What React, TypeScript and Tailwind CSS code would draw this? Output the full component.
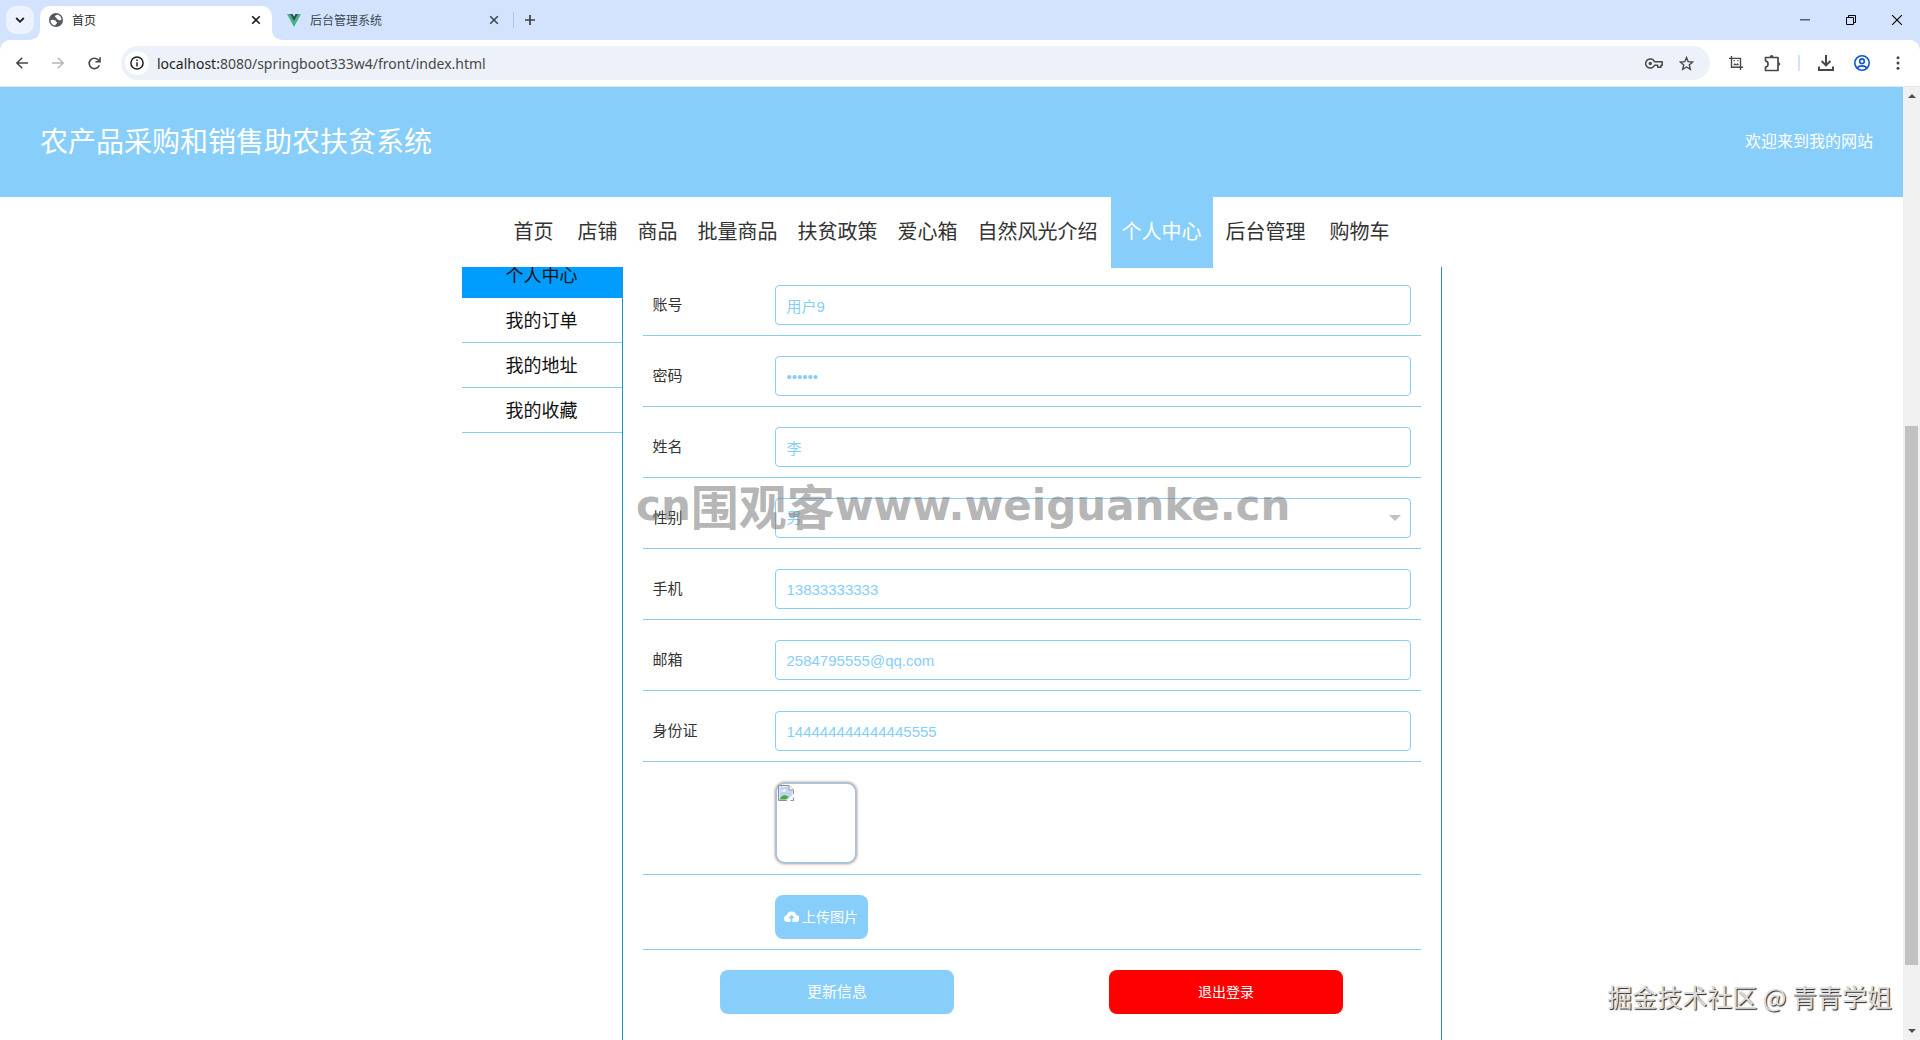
import type { ReactNode } from "react";

const CJK = "font-['Noto_Sans_CJK_SC',sans-serif]";
const FIELD =
  "block h-[40px] w-full appearance-none rounded border border-[#87cefa] bg-white px-[11px] font-['Liberation_Sans','Noto_Sans_CJK_SC',sans-serif] text-[15px] text-[#87cefa] outline-none";

function IconButton({ label, className, children }: { label: string; className: string; children: ReactNode }) {
  return (
    <button type="button" aria-label={label} className={`flex shrink-0 items-center justify-center ${className}`}>
      {children}
    </button>
  );
}

function CloseIcon() {
  return (
    <svg width="10" height="10" viewBox="0 0 10 10" fill="none" stroke="currentColor" strokeWidth="1.6">
      <path d="M1.2 1.2l7.6 7.6M8.8 1.2L1.2 8.8" />
    </svg>
  );
}

function TabStrip() {
  return (
    <header className="flex h-[40px] shrink-0 items-center pl-[6px] text-[12px]">
      <IconButton label="搜索标签页" className="size-[28px] rounded-[10px] bg-[#edf3fe] text-[#1f1f1f]">
        <svg width="10" height="6" viewBox="0 0 10 6" fill="none" stroke="currentColor" strokeWidth="1.8">
          <path d="M1.2 1l3.8 3.8L8.8 1" />
        </svg>
      </IconButton>
      <div className="relative ml-[6px] mt-[6px] flex h-[34px] w-[232px] items-center rounded-t-[10px] bg-white pb-[6px] pl-[9px] pr-[7px] text-[#1f1f1f]">
        <svg className="absolute bottom-0 left-[-10px]" width="10" height="10" viewBox="0 0 10 10">
          <path d="M10 0v10H0A10 10 0 0 0 10 0z" fill="#fff" />
        </svg>
        <svg className="absolute bottom-0 right-[-10px]" width="10" height="10" viewBox="0 0 10 10">
          <path d="M0 0v10h10A10 10 0 0 1 0 0z" fill="#fff" />
        </svg>
        <svg width="14" height="14" viewBox="0 0 14 14">
          <circle cx="7" cy="7" r="7" fill="#55585c" />
          <path
            d="M1.500 7.300C3 6.800 5 6.500 6.300 7.600c1 .8.600 1.600 2 1.900-.2 1.300-1.900 1.100-2 3C3.500 12.300 1.400 10 1.500 7.300zM8.400 1.600C7.500 2.300 6 2.300 6 3.600c0 .9 1.100.7 1.300 1.500.2 1.100 1.300.8 1.800 1.600.6.900 1.900.2 3.300.6C12.700 4.600 11 2.300 8.400 1.600z"
            fill="#fff"
          />
        </svg>
        <span className="ml-[9px] flex-1">首页</span>
        <IconButton label="关闭首页" className="size-[18px]">
          <CloseIcon />
        </IconButton>
      </div>
      <div className="ml-[15px] flex w-[216px] items-center text-[#3c4654]">
        <svg width="14" height="13" viewBox="0 0 14 13">
          <path d="M0 0h2.800L7 7.200 11.200 0H14L7 13z" fill="#41b883" />
          <path d="M2.800 0h2.700L7 2.700 8.500 0h2.700L7 7.300z" fill="#35495e" />
        </svg>
        <span className="ml-[9px] flex-1">后台管理系统</span>
        <IconButton label="关闭后台管理系统" className="size-[18px]">
          <CloseIcon />
        </IconButton>
      </div>
      <div className="ml-[10px] h-[16px] w-px bg-[#a8c7fa]" />
      <IconButton label="新标签页" className="ml-[6px] size-[20px] text-[#3c4043]">
        <svg width="10" height="10" viewBox="0 0 10 10" stroke="currentColor" strokeWidth="1.700">
          <path d="M5 0v10M0 5h10" />
        </svg>
      </IconButton>
      <div className="ml-auto flex">
        <IconButton label="最小化" className="h-[40px] w-[46px]">
          <svg width="10" height="2" viewBox="0 0 10 2">
            <path d="M0 0h10v1.500H0z" fill="#55606f" />
          </svg>
        </IconButton>
        <IconButton label="还原" className="h-[40px] w-[46px]">
          <svg width="10" height="10" viewBox="0 0 10 10" fill="none" stroke="#000">
            <path d="M.5 2.500h7v7h-7zM2.500 2.500v-2h7v7h-2" />
          </svg>
        </IconButton>
        <IconButton label="关闭" className="h-[40px] w-[46px]">
          <svg width="10" height="10" viewBox="0 0 10 10" stroke="#000" strokeWidth="1.100">
            <path d="M0 0l10 10M10 0L0 10" />
          </svg>
        </IconButton>
      </div>
    </header>
  );
}

function Toolbar() {
  return (
    <div className="flex h-[47px] shrink-0 items-center rounded-t-[10px] border-b border-[#e4e7ec] bg-white pl-[4px] pr-[12px] text-[#474747]">
      <IconButton label="后退" className="size-[36px]">
        <svg width="12" height="12" viewBox="0 0 12 12" fill="none" stroke="currentColor" strokeWidth="1.500">
          <path d="M12 6H1.200M6.200.7L.9 6l5.300 5.300" />
        </svg>
      </IconButton>
      <IconButton label="前进" className="size-[36px] text-[#b4b6b8]">
        <svg width="12" height="12" viewBox="0 0 12 12" fill="none" stroke="currentColor" strokeWidth="1.500">
          <path d="M0 6h10.800M5.800.7L11.100 6l-5.300 5.300" />
        </svg>
      </IconButton>
      <IconButton label="重新加载" className="size-[36px]">
        <svg width="13" height="13" viewBox="0 0 13 13" fill="none" stroke="currentColor" strokeWidth="1.600">
          <path d="M11.300 8.200A5.200 5.200 0 1 1 10.600 3.300L11.600 4.400M12 .3v4.500H7.500" />
        </svg>
      </IconButton>
      <div className="ml-[9px] flex h-[34px] flex-1 items-center rounded-full bg-[#edf1f9] pl-[4px] pr-[14px]">
        <IconButton label="查看网站信息" className="size-[24px] rounded-full bg-white text-[#1f1f1f]">
          <svg width="14" height="14" viewBox="0 0 14 14" fill="none" stroke="currentColor" strokeWidth="1.500">
            <circle cx="7" cy="7" r="6.100" />
            <path d="M7 6.200v4.200M7 3.400v1.600" />
          </svg>
        </IconButton>
        <div className="ml-[8px] flex-1 font-['Noto_Sans',sans-serif] text-[14px] text-[#474747]">
          <span className="text-[#1f1f1f]">localhost:</span>8080/springboot333w4/front/index.html
        </div>
        <IconButton label="管理密码" className="w-[20px]">
          <svg width="18" height="11" viewBox="0 0 18 11" fill="none" stroke="currentColor" strokeWidth="1.500">
            <path d="M9.500 3.700A4.600 4.600 0 1 0 9.500 7.300h3.200v2h3.300v-2h1.200V3.700z" strokeLinejoin="round" />
            <circle cx="5.300" cy="5.500" r="1.700" fill="currentColor" stroke="none" />
          </svg>
        </IconButton>
        <IconButton label="为此标签页添加书签" className="ml-[12px] w-[20px]">
          <svg width="15" height="15" viewBox="0 0 15 15" fill="none" stroke="currentColor" strokeWidth="1.400">
            <path d="M7.500 1.600l1.700 4.100 4.400.4-3.300 2.900 1 4.300-3.800-2.300-3.800 2.300 1-4.300L1.400 6.100l4.400-.4z" />
          </svg>
        </IconButton>
      </div>
      <IconButton label="截图" className="ml-[16px] w-[20px]">
        <svg width="14" height="14" viewBox="0 0 14 14" fill="none" stroke="currentColor" strokeWidth="1.400">
          <path d="M2.500 0v11.200H14M0 2.400h11.500V14" />
          <path d="M4.200 9.300l1.700-2.200 1.200 1.300L8.400 6.900l1.700 2.400z" fill="currentColor" stroke="none" />
          <path d="M4.600 4.600h1.200M8.200 4.600h1.200" />
        </svg>
      </IconButton>
      <IconButton label="扩展程序" className="ml-[16px] w-[20px]">
        <svg width="17" height="17" viewBox="0 0 17 17" fill="none" stroke="currentColor" strokeWidth="1.700" strokeLinejoin="round">
          <path d="M1.500 2.500h12.500v13H1.500v-3.300c3.400-.5 3.400-5.900 0-6.400z" />
          <path d="M5.700 2a1.900 1.900 0 0 1 3.800 0zM14.500 7.200a1.700 1.700 0 0 1 0 3.600z" fill="currentColor" stroke="none" />
        </svg>
      </IconButton>
      <div className="ml-[16px] h-[16px] w-[2px] bg-[#d3e3fd]" />
      <IconButton label="下载内容" className="ml-[16px] w-[20px]">
        <svg width="16" height="16" viewBox="0 0 16 16" fill="none" stroke="currentColor" strokeWidth="2">
          <path d="M8 0v10M3.600 6L8 10.400 12.400 6M1 11.500V15h14v-3.500" />
        </svg>
      </IconButton>
      <IconButton label="个人资料" className="ml-[16px] w-[20px] text-[#0b57d0]">
        <svg width="16" height="16" viewBox="0 0 16 16" fill="none" stroke="currentColor" strokeWidth="1.600">
          <circle cx="8" cy="8" r="7.200" />
          <circle cx="8" cy="6.200" r="2.300" />
          <path d="M3 13c2.500-2.900 7.500-2.900 10 0" />
        </svg>
      </IconButton>
      <IconButton label="更多" className="ml-[16px] w-[20px]">
        <svg width="4" height="14" viewBox="0 0 4 14" fill="currentColor">
          <circle cx="2" cy="1.700" r="1.500" />
          <circle cx="2" cy="7" r="1.500" />
          <circle cx="2" cy="12.300" r="1.500" />
        </svg>
      </IconButton>
    </div>
  );
}

function NavLink({ text, kind }: { text: string; kind: "plain" | "grouped" | "active" }) {
  const look = {
    plain: "px-[11px] text-[#333]",
    grouped: "px-[10px] text-[#333]",
    active: "px-[11px] bg-[#87cefa] text-white",
  }[kind];
  return (
    <a href="#" className={`block h-[71px] leading-[68px] ${look}`}>
      {text}
    </a>
  );
}

function Navigation() {
  return (
    <nav className="relative z-10 flex h-[70px] shrink-0 justify-center gap-[2px] bg-white text-[20px]">
      <NavLink text="首页" kind="plain" />
      <div className="flex px-px">
        {["店铺", "商品", "批量商品", "扶贫政策", "爱心箱", "自然风光介绍"].map((text) => (
          <NavLink key={text} text={text} kind="grouped" />
        ))}
      </div>
      <NavLink text="个人中心" kind="active" />
      <NavLink text="后台管理" kind="plain" />
      <NavLink text="购物车" kind="plain" />
    </nav>
  );
}

function Row({ label, id, children }: { label?: string; id?: string; children: ReactNode }) {
  return (
    <div className="flex items-center border-b border-[#87ceeb] px-[10px] pb-[10px] pt-[20px]">
      <div className="w-[122px] shrink-0 pb-[2px] text-[15px] leading-[20px] text-[#333]">
        {label && <label htmlFor={id}>{label}</label>}
      </div>
      <div className="relative flex-1">{children}</div>
    </div>
  );
}

function TextRow({ label, id, value, type = "text" }: { label: string; id: string; value: string; type?: string }) {
  return (
    <Row label={label} id={id}>
      <input id={id} type={type} defaultValue={value} autoComplete="off" className={FIELD} />
    </Row>
  );
}

function BrokenImage() {
  return (
    <div
      role="img"
      aria-label="头像"
      className="size-[82px] rounded-[10px] border-2 border-[#a9c4da] bg-white p-px shadow-[0_0_2px_1px_#e8cabf]"
    >
      <svg width="16" height="16" viewBox="0 0 16 16">
        <path d="M.5.5h10.500l4.500 4.500v10.500H.5z" fill="#fff" stroke="#8a9099" />
        <path d="M1.500 1.500h9v4h4v9h-13z" fill="#c3d3f3" />
        <path d="M3 6.500c0-1.500 1.500-2 2.200-1.300C6 3.700 8.200 4.300 8 6.500z" fill="#fff" />
        <path d="M1.500 14.500c2-5 6-5.500 9-2.500l-2.500 2.500z" fill="#4ea83c" />
        <path d="M11 .5V5h4.500" fill="#fff" stroke="#8a9099" />
        <path d="M16 8.500L8.500 16h3.500l4-4z" fill="#fff" />
      </svg>
    </div>
  );
}

function Profile() {
  return (
    <div className="-mt-[14px] flex w-full max-w-[980px]">
      <aside className="w-[160px] text-center text-[18px] leading-[42px] text-[#111]">
        <a href="#" className="block border-b border-[#009dff] bg-[#009dff] pb-[2px]">个人中心</a>
        {["我的订单", "我的地址", "我的收藏"].map((text) => (
          <a key={text} href="#" className="block border-b border-[#87ceeb] pb-[2px]">
            {text}
          </a>
        ))}
      </aside>
      <form className="flex-1 border-x border-[#1a96d4] px-[20px] pt-[12px]">
        <TextRow label="账号" id="account" value="用户9" />
        <TextRow label="密码" id="password" value="123456" type="password" />
        <TextRow label="姓名" id="name" value="李" />
        <Row label="性别" id="gender">
          <select id="gender" className={FIELD} defaultValue="男">
            <option>男</option>
            <option>女</option>
          </select>
          <svg className="pointer-events-none absolute right-[10px] top-[17px]" width="12" height="6" viewBox="0 0 12 6">
            <path d="M0 0h12L6 6z" fill="#c2c2c2" />
          </svg>
        </Row>
        <TextRow label="手机" id="phone" value="13833333333" />
        <TextRow label="邮箱" id="email" value="2584795555@qq.com" />
        <TextRow label="身份证" id="idcard" value="144444444444445555" />
        <Row>
          <BrokenImage />
        </Row>
        <Row>
          <button type="button" className="flex h-[44px] w-[93px] items-center justify-center gap-[3px] rounded-lg bg-[#87cefa] pb-[2px] text-[14px] text-white">
            <svg width="15" height="11" viewBox="0 0 15 11">
              <path d="M3.500 11a3.400 3.400 0 0 1-.9-6.700A5 5 0 0 1 12.200 4 3.500 3.500 0 0 1 11.500 11z" fill="#fff" />
              <path d="M7.500 3.800l3.200 3.400H8.400V11H6.600V7.200H4.300z" fill="#87cefa" />
            </svg>
            上传图片
          </button>
        </Row>
        <div className="grid grid-cols-2 justify-items-center py-[20px] text-white">
          <button type="button" className="h-[44px] w-3/5 rounded-lg bg-[#87cefa] pb-[2px] text-[15px]">更新信息</button>
          <button type="button" className="h-[44px] w-3/5 rounded-lg bg-[#f00] pb-[2px] text-[14px]">退出登录</button>
        </div>
      </form>
    </div>
  );
}

function Scrollbar() {
  return (
    <div className="flex w-[17px] shrink-0 flex-col items-center bg-[#f1f1f1]">
      <svg className="mt-[7px]" width="8" height="4" viewBox="0 0 8 4">
        <path d="M0 4h8L4 0z" fill="#505050" />
      </svg>
      <div className="flex w-[13px] flex-1 flex-col py-[6px]">
        <div className="grow-[322]" />
        <div className="grow-[539] bg-[#c1c1c1]" />
        <div className="grow-[58]" />
      </div>
      <svg className="mb-[7px]" width="8" height="4" viewBox="0 0 8 4">
        <path d="M0 0h8L4 4z" fill="#505050" />
      </svg>
    </div>
  );
}

export default function App() {
  return (
    <div className={`relative flex h-screen flex-col overflow-hidden bg-[#d3e3fd] ${CJK}`}>
      <TabStrip />
      <Toolbar />
      <div className="flex min-h-0 flex-1 bg-white">
        <div className="flex min-w-0 flex-1 flex-col">
          <div className="flex h-[110px] shrink-0 items-center justify-between bg-[#87cefa] pb-[4px] pl-[40px] pr-[30px] text-white">
            <h1 className="text-[28px]">农产品采购和销售助农扶贫系统</h1>
            <span className="text-[16px]">欢迎来到我的网站</span>
          </div>
          <Navigation />
          <main className="flex min-h-0 flex-1 justify-center overflow-hidden">
            <Profile />
          </main>
        </div>
        <Scrollbar />
      </div>
      <div className="pointer-events-none absolute left-[636px] top-[474px] flex items-center whitespace-nowrap font-['DejaVu_Sans',sans-serif] text-[42px] font-bold leading-[60px] text-[#777]/55">
        cn
        <span className="pb-[4px] font-['Noto_Sans_CJK_SC',sans-serif] text-[48px]">围观客</span>
        www.weiguanke.cn
      </div>
      <div className="pointer-events-none absolute bottom-[26px] right-[28px] text-[25px] leading-[36px] text-[#dcdcdc] [text-shadow:1px_1px_1px_#222]">
        掘金技术社区 @ 青青学姐
      </div>
    </div>
  );
}
